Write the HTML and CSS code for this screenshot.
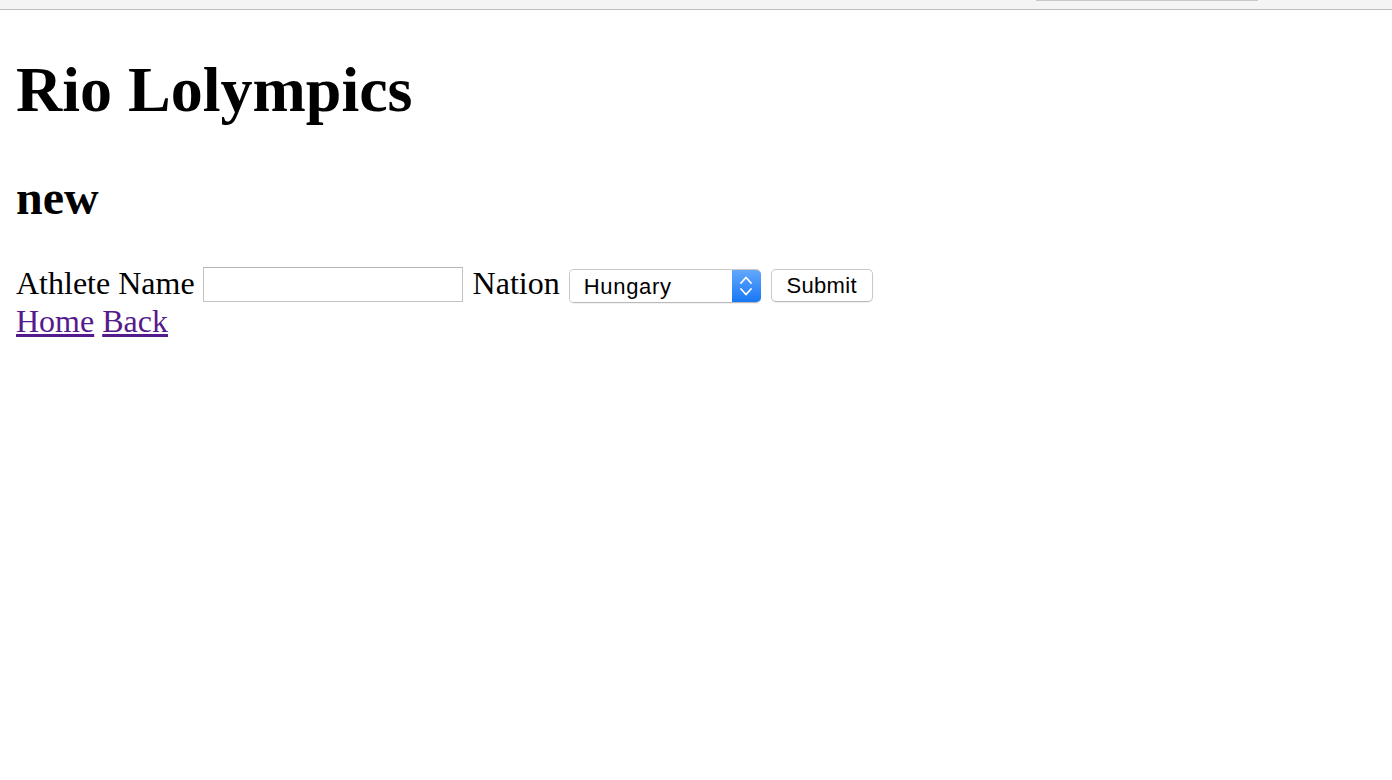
FILE: index.html
```html
<!DOCTYPE html>
<html>
<head>
<meta charset="utf-8">
<title>Rio Lolympics</title>
<link rel="stylesheet" href="styles.css">
</head>
<body>
<div class="chrome"><span class="chrome-tab"></span></div>
<main class="page">
  <h1 class="title">Rio Lolympics</h1>
  <h2 class="subtitle">new</h2>
  <form class="athlete-form">
    <label class="field-label" for="name">Athlete Name</label>
    <input class="text-input" id="name" type="text">
    <label class="field-label" for="nation">Nation</label>
    <span class="select-wrap"><select class="select" id="nation"><option>Hungary</option></select><span class="select-arrow"><svg width="14" height="24" viewBox="0 0 14 24"><path d="M2 9 L7 3.5 L12 9" fill="none" stroke="#fff" stroke-width="1.8" stroke-linecap="round" stroke-linejoin="round"/><path d="M2 15 L7 20.5 L12 15" fill="none" stroke="#fff" stroke-width="1.8" stroke-linecap="round" stroke-linejoin="round"/></svg></span></span>
    <button class="submit" type="button">Submit</button>
  </form>
  <div class="nav"><a class="nav-link" href="#">Home</a> <a class="nav-link" href="#">Back</a></div>
</main>
</body>
</html>
```
FILE: styles.css
```css
html, body {
  margin: 0;
  padding: 0;
  background: #ffffff;
}
body {
  font-family: "Liberation Serif", "Times New Roman", serif;
  font-size: 32px;
  color: #000;
}
.chrome {
  position: relative;
  height: 9px;
  background: #f4f4f4;
  border-bottom: 1px solid #bdbdbd;
}
.chrome-tab {
  position: absolute;
  left: 1036px;
  top: 0;
  width: 222px;
  height: 1px;
  background: #c9c9c9;
}
.page {
  padding: 0 16px;
  display: flow-root;
}
.title {
  font-size: 64px;
  font-weight: bold;
  margin: 43px 0 43px;
  line-height: 73.6px;
}
.subtitle {
  font-size: 48px;
  font-weight: bold;
  margin: 0 0 40px;
  line-height: 55.2px;
}
.athlete-form {
  margin: 0;
  line-height: 36.8px;
}
.field-label {
  font-size: 32px;
}
.text-input {
  box-sizing: border-box;
  width: 260px;
  height: 35px;
  border: 1px solid #c3c3c3;
  border-top-color: #b5b5b5;
  padding: 0 4px;
  margin: 0 2px 0 0;
  font-size: 22px;
  vertical-align: 2px;
  background: #fff;
}
.select-wrap {
  display: inline-flex;
  box-sizing: border-box;
  width: 192px;
  height: 34px;
  border: 1px solid #c8c8c8;
  border-right: none;
  border-bottom-color: #b9b9b9;
  border-radius: 5px;
  overflow: hidden;
  vertical-align: 0;
  margin-left: 1px;
  box-shadow: 0 1px 1px rgba(0,0,0,0.06);
}
.select {
  appearance: none;
  -webkit-appearance: none;
  flex: 1;
  border: none;
  background: #fff;
  font-family: "Liberation Sans", Arial, sans-serif;
  font-size: 22px;
  letter-spacing: 0.7px;
  padding: 0 0 0 14px;
  margin: 0;
  height: 100%;
  color: #000;
  outline: none;
}
.select-arrow {
  width: 29px;
  display: flex;
  align-items: center;
  justify-content: center;
  background: linear-gradient(#62a8fb, #1877f6);
}
.submit {
  box-sizing: border-box;
  width: 102px;
  height: 33px;
  border: 1px solid #c9c9c9;
  border-bottom-color: #b8b8b8;
  border-radius: 5px;
  background: #fff;
  font-family: "Liberation Sans", Arial, sans-serif;
  font-size: 22px;
  letter-spacing: 0.3px;
  color: #000;
  padding: 0;
  margin-left: 2px;
  vertical-align: 1px;
  box-shadow: 0 1px 1px rgba(0,0,0,0.06);
}
.nav {
  line-height: 36.8px;
}
.nav-link {
  color: #551a8b;
  text-decoration: underline;
}
```
